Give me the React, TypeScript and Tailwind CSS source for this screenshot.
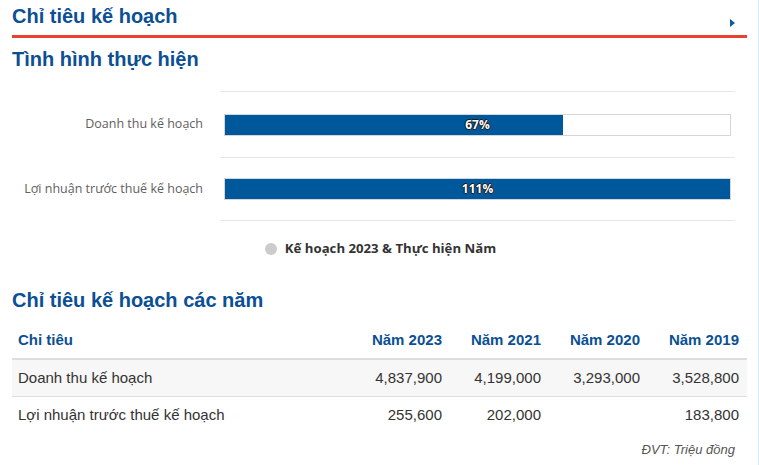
const heading = "font-['Liberation_Sans',Arial,sans-serif] font-bold text-[20px] leading-[24px] text-[#0b4f94]";

const bars = [
  { label: "Doanh thu kế hoạch", pct: 67 },
  { label: "Lợi nhuận trước thuế kế hoạch", pct: 111 },
];

const years = ["Năm 2023", "Năm 2021", "Năm 2020", "Năm 2019"];

const rows = [
  { name: "Doanh thu kế hoạch", values: ["4,837,900", "4,199,000", "3,293,000", "3,528,800"] },
  { name: "Lợi nhuận trước thuế kế hoạch", values: ["255,600", "202,000", "", "183,800"] },
];

function Bar({ pct }: { pct: number }) {
  return (
    <div className="relative h-[22px] flex-1 border border-[#d6d6d6] bg-white">
      <div className="h-full bg-[#00589c]" style={{ width: `${Math.min(pct, 100)}%` }} />
      <span className="absolute inset-0 flex items-center justify-center text-[12px] font-bold text-white [text-shadow:1px_0_0_#1a1a1a,-1px_0_0_#1a1a1a,0_1px_0_#1a1a1a,0_-1px_0_#1a1a1a]">
        {pct}%
      </span>
    </div>
  );
}

export default function App() {
  return (
    <main className="h-[465px] w-[759px] overflow-hidden border-r border-[#d5ebf8] bg-white pl-[12px] pr-[11px]">
      <section className="flex items-start justify-between border-b-[3px] border-[#e8412f] pt-[4px] pb-[7px]">
        <h1 className={heading}>Chỉ tiêu kế hoạch</h1>
        <span className="mr-[12px] mt-[15px] h-0 w-0 border-y-[4px] border-l-[5px] border-y-transparent border-l-[#0b5aa6]" />
      </section>

      <h2 className={`${heading} mt-[9px]`}>Tình hình thực hiện</h2>

      <section className="mt-[20px] font-['Open_Sans',sans-serif]">
        {bars.map((b, i) => (
          <div key={b.label} className="flex">
            <div className="flex w-[191px] items-center justify-end text-[12.5px] text-[#606060]">{b.label}</div>
            <div
              className={`ml-[17px] flex w-[515px] items-center border-t border-[#e6e6e6] px-[4px] ${
                i === 0 ? "h-[66px]" : "h-[64px] border-b"
              }`}
            >
              <Bar pct={b.pct} />
            </div>
          </div>
        ))}
        <div className="mt-[18px] flex items-center justify-center gap-[8px] pl-[2px]">
          <span className="h-[12px] w-[12px] rounded-full bg-[#cccccc]" />
          <span className="text-[13.2px] font-bold text-[#333333]">Kế hoạch 2023 &amp; Thực hiện Năm</span>
        </div>
      </section>

      <h2 className={`${heading} mt-[29px]`}>Chỉ tiêu kế hoạch các năm</h2>

      <section className="mt-[10px] font-['Liberation_Sans',Arial,sans-serif] text-[15px] leading-[20px]">
        <div className="grid h-[38px] grid-cols-[1fr_99px_99px_99px_99px] items-center border-b-2 border-[#dddddd] font-bold text-[#0b4f94]">
          <div className="pl-[6px]">Chỉ tiêu</div>
          {years.map((y) => (
            <div key={y} className="pr-[8px] text-right">
              {y}
            </div>
          ))}
        </div>
        {rows.map((r, i) => (
          <div
            key={r.name}
            className={`grid grid-cols-[1fr_99px_99px_99px_99px] items-center text-[#333333] ${
              i === 0 ? "h-[37px] border-b border-[#dddddd] bg-[#f7f7f7]" : "h-[36px]"
            }`}
          >
            <div className="pl-[6px]">{r.name}</div>
            {r.values.map((v, j) => (
              <div key={j} className="pr-[8px] text-right">
                {v}
              </div>
            ))}
          </div>
        ))}
        <p className="mt-[7px] pr-[12px] text-right text-[13px] italic text-[#555555]">ĐVT: Triệu đồng</p>
      </section>
    </main>
  );
}
